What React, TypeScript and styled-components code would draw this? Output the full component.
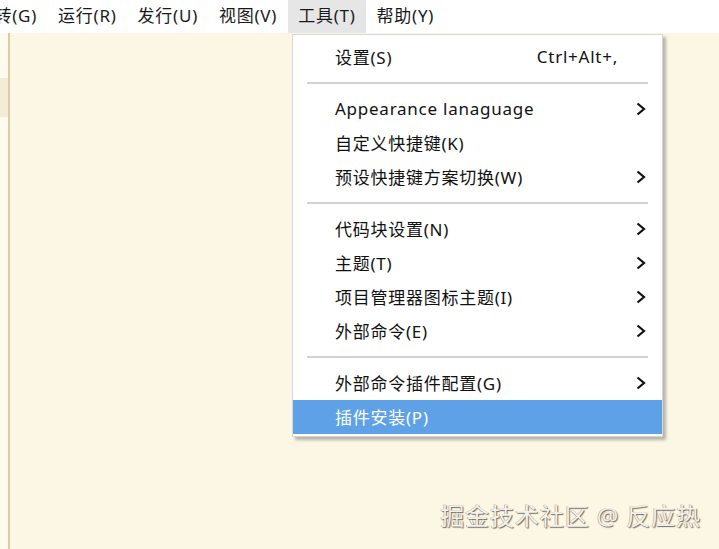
import React from "react";
import styled, { createGlobalStyle } from "styled-components";

const Global = createGlobalStyle`
  html, body { margin: 0; padding: 0; }
  body {
    width: 719px; height: 549px; overflow: hidden;
    font-family: "Noto Sans", "Noto Sans CJK SC", sans-serif;
    background: #fcf7e5;
  }
  * { box-sizing: border-box; }
`;

const Page = styled.div`
  position: relative;
  width: 719px;
  height: 549px;
  display: flex;
  flex-direction: column;
`;

const MenuBar = styled.div`
  height: 33px;
  background: #ffffff;
  display: flex;
  align-items: stretch;
  margin-left: -16px;
`;

const BarItem = styled.div<{ $active?: boolean }>`
  padding: 0 10.5px 5px;
  display: flex;
  align-items: center;
  font-size: 17px;
  letter-spacing: 0.75px;
  color: #1a1a1a;
  background: ${(p) => (p.$active ? "#e6e6e6" : "transparent")};
  white-space: nowrap;
`;

const Body = styled.div`
  flex: 1;
  display: flex;
`;

const Side = styled.div`
  width: 8px;
  background: #fefaee;
  padding-top: 45px;
`;

const SideBand = styled.div`
  height: 39px;
  background: #f3ecd6;
`;

const Divider = styled.div`
  width: 2px;
  background: #d8cea6;
`;

const Editor = styled.div`
  flex: 1;
  background: #fcf7e5;
`;

const Menu = styled.div`
  position: absolute;
  left: 292px;
  top: 34px;
  width: 371px;
  background: #ffffff;
  border: 1px solid #d6d6d6;
  padding: 5px 0 2px;
  box-shadow: 3px 3px 3px rgba(0, 0, 0, 0.28);
  display: flex;
  flex-direction: column;
`;

const Row = styled.div<{ $hl?: boolean }>`
  height: 34px;
  display: flex;
  align-items: center;
  padding: 0 16px 2px 42px;
  font-size: 17px;
  letter-spacing: 0.75px;
  color: ${(p) => (p.$hl ? "#ffffff" : "#111111")};
  background: ${(p) => (p.$hl ? "#5ea1e6" : "transparent")};
`;

const Label = styled.span`
  flex: 1;
  white-space: nowrap;
`;

const Shortcut = styled.span`
  margin-right: 28px;
`;

const Sep = styled.div`
  height: 18px;
  display: flex;
  align-items: center;
  padding: 0 14px 0 14px;
  &::after {
    content: "";
    flex: 1;
    height: 2px;
    background: #d2d2d2;
  }
`;

const Watermark = styled.div`
  position: absolute;
  right: 18px;
  bottom: 17px;
  font-size: 24px;
  color: #f4f2ec;
  letter-spacing: 0.9px;
  text-shadow: 1px 1px 1px #6e6a60, -0.5px -0.5px 0 #9a968c;
  white-space: nowrap;
`;

const Chevron = () => (
  <svg width="10" height="14" viewBox="0 0 10 14" style={{ display: "block", marginTop: 2 }}>
    <polyline points="1.5,1.5 8,7 1.5,12.5" fill="none" stroke="#111" strokeWidth="2.2" />
  </svg>
);

type Item = { label: string; shortcut?: string; sub?: boolean; hl?: boolean } | "sep";

const items: Item[] = [
  { label: "设置(S)", shortcut: "Ctrl+Alt+," },
  "sep",
  { label: "Appearance lanaguage", sub: true },
  { label: "自定义快捷键(K)" },
  { label: "预设快捷键方案切换(W)", sub: true },
  "sep",
  { label: "代码块设置(N)", sub: true },
  { label: "主题(T)", sub: true },
  { label: "项目管理器图标主题(I)", sub: true },
  { label: "外部命令(E)", sub: true },
  "sep",
  { label: "外部命令插件配置(G)", sub: true },
  { label: "插件安装(P)", hl: true },
];

const bar = ["转(G)", "运行(R)", "发行(U)", "视图(V)", "工具(T)", "帮助(Y)"];

export default function App() {
  return (
    <>
      <Global />
      <Page>
        <MenuBar>
          {bar.map((b) => (
            <BarItem key={b} $active={b === "工具(T)"}>
              {b}
            </BarItem>
          ))}
        </MenuBar>
        <Body>
          <Side>
            <SideBand />
          </Side>
          <Divider />
          <Editor />
        </Body>
        <Menu>
          {items.map((it, i) =>
            it === "sep" ? (
              <Sep key={i} />
            ) : (
              <Row key={i} $hl={it.hl}>
                <Label>{it.label}</Label>
                {it.shortcut && <Shortcut>{it.shortcut}</Shortcut>}
                {it.sub && <Chevron />}
              </Row>
            )
          )}
        </Menu>
        <Watermark>掘金技术社区 @ 反应热</Watermark>
      </Page>
    </>
  );
}
